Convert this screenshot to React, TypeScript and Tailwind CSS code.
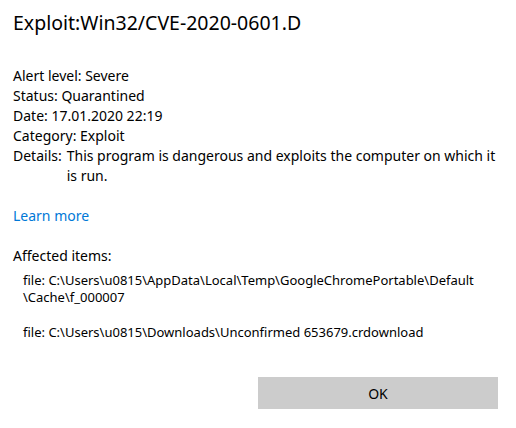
import React from "react";

export default function App() {
  return (
    <div className="w-[516px] h-[428px] bg-white text-black flex flex-col pl-[13px] pr-[18px] pt-[9px] font-['Noto_Sans',sans-serif]">
      <h1 className="text-[19.5px] leading-[28px] font-normal text-[#000]">Exploit:Win32/CVE-2020-0601.D</h1>

      <div className="mt-[29px] text-[14px] leading-[20px] flex flex-col">
        <div>Alert level: Severe</div>
        <div>Status: Quarantined</div>
        <div>Date: 17.01.2020 22:19</div>
        <div>Category: Exploit</div>
        <div className="flex gap-[5px]">
          <span className="shrink-0">Details:</span>
          <span className="w-[440px]">This program is dangerous and exploits the computer on which it is run.</span>
        </div>
      </div>

      <a className="mt-[20px] text-[14px] leading-[20px] text-[#0078d7] self-start cursor-pointer">Learn more</a>

      <div className="mt-[20px] text-[14px] leading-[20px]">Affected items:</div>

      <div className="mt-[6px] pl-[10px] text-[13px] leading-[17px] flex flex-col gap-[18px]">
        <div>
          <div>file: C:\Users\u0815\AppData\Local\Temp\GoogleChromePortable\Default</div>
          <div>\Cache\f_000007</div>
        </div>
        <div>file: C:\Users\u0815\Downloads\Unconfirmed 653679.crdownload</div>
      </div>

      <div className="flex justify-end mt-auto mb-[19px]">
        <button className="w-[240px] h-[32px] bg-[#cccccc] text-[14px] text-black">OK</button>
      </div>
    </div>
  );
}
